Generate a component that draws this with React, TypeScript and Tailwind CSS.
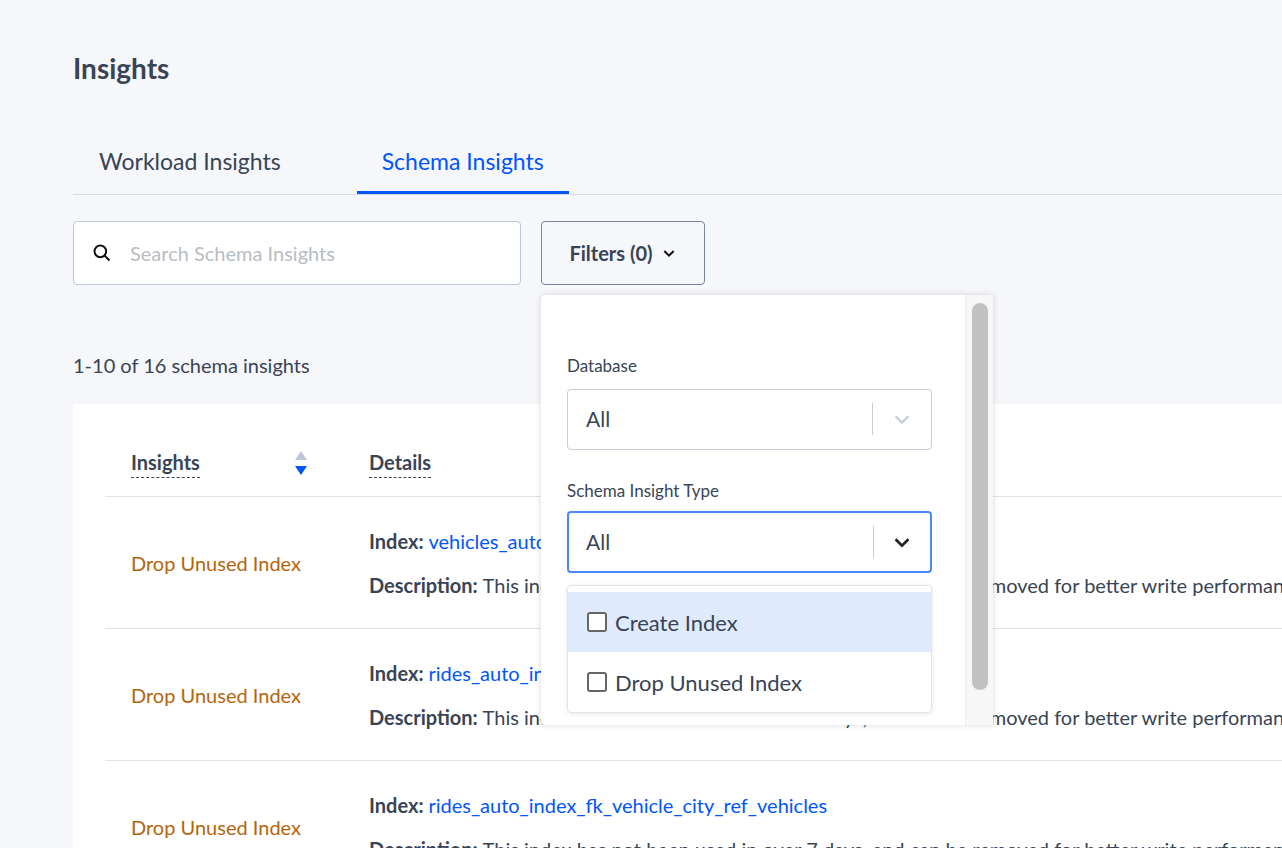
import React from "react";

const rows = [
  { idx: "vehicles_auto_index_fk_city_ref_users" },
  { idx: "rides_auto_index_fk_city_ref_users" },
  { idx: "rides_auto_index_fk_vehicle_city_ref_vehicles" },
];

function Row({ idx }: { idx: string }) {
  return (
    <div className="flex h-[132px] items-center border-b border-[#dfe3ea]">
      <div className="w-[264px] shrink-0 whitespace-nowrap pl-[26px] text-[20px] text-[#b4650c]">Drop Unused Index</div>
      <div className="flex flex-col gap-[14px] whitespace-nowrap text-[20px] text-[#394455]">
        <div><span className="font-bold">Index: </span><span className="text-[#0055ff]">{idx}</span></div>
        <div><span className="font-bold">Description: </span>This index has not been used in over 7 days, and can be removed for better write performance.</div>
      </div>
    </div>
  );
}

export default function App() {
  return (
    <div className="relative h-[848px] w-[1282px] overflow-hidden bg-[#f5f7fa] font-[Lato,sans-serif] text-[#394455]">
      <div className="pl-[73px]">
        <h1 className="pt-[50px] text-[28px] font-bold leading-[36px] text-[#394455]">Insights</h1>
        <div className="mt-[50px] flex h-[59px] border-b border-[#d6dbe4] text-[23px]">
          <div className="px-[26px] pt-[8px]">Workload Insights</div>
          <div className="ml-[50px] border-b-[3px] border-[#0055ff] px-[25px] pt-[8px] text-[#0055ff]">Schema Insights</div>
        </div>
        <div className="mt-[26px] flex gap-[20px]">
          <div className="flex h-[64px] w-[448px] items-center gap-[18px] rounded border border-[#c0c6d9] bg-white px-[18px]">
            <svg width="20" height="20" viewBox="0 0 24 24" fill="none" stroke="#111" strokeWidth="2.4"><circle cx="10" cy="10" r="7" /><path d="M15 15l6 6" /></svg>
            <span className="text-[20px] text-[#b8bcc4]">Search Schema Insights</span>
          </div>
          <div className="flex h-[64px] w-[164px] items-center justify-center gap-[8px] rounded border border-[#7a849a] text-[20px] font-bold">
            Filters (0)
            <svg width="16" height="16" viewBox="0 0 24 24" fill="none" stroke="#111" strokeWidth="3"><path d="M5 9l7 7 7-7" /></svg>
          </div>
        </div>
        <div className="mt-[65px] text-[20px]">1-10 of 16 schema insights</div>
        <div className="mt-[24px] overflow-hidden bg-white pl-[32px]">
          <div className="flex h-[93px] items-end border-b border-[#dfe3ea] pb-[18px]">
            <div className="flex w-[264px] shrink-0 items-center pl-[26px]">
              <span className="border-b border-dashed border-[#394455] text-[20px] font-bold">Insights</span>
              <svg className="ml-[94px]" width="14" height="26" viewBox="0 0 14 26"><path d="M7 1l6 9H1z" fill="#c0c6d9" /><path d="M7 25l6-9H1z" fill="#0055ff" /></svg>
            </div>
            <span className="border-b border-dashed border-[#394455] text-[20px] font-bold">Details</span>
          </div>
          {rows.map((r) => <Row key={r.idx} idx={r.idx} />)}
        </div>
      </div>
      <div className="absolute left-[541px] top-[295px] flex h-[430px] w-[452px] rounded-l bg-white shadow-[0_0_6px_rgba(0,0,0,0.15)]">
        <div className="flex-1 pl-[26px] pr-[33px] pt-[58px]">
          <div className="text-[17px] text-[#394455]">Database</div>
          <div className="mt-[10px] flex h-[61px] items-center rounded border border-[#c9cdd9] pl-[18px]">
            <span className="flex-1 text-[21px]">All</span>
            <div className="h-[32px] w-px bg-[#ccc]" />
            <svg className="mx-[18px]" width="22" height="22" viewBox="0 0 24 24" fill="none" stroke="#c9cdd9" strokeWidth="2.6"><path d="M5 9l7 7 7-7" /></svg>
          </div>
          <div className="mt-[28px] text-[17px]">Schema Insight Type</div>
          <div className="mt-[8px] flex h-[62px] items-center rounded border-2 border-[#4a87f7] pl-[17px]">
            <span className="flex-1 text-[21px]">All</span>
            <div className="h-[32px] w-px bg-[#ccc]" />
            <svg className="mx-[17px]" width="22" height="22" viewBox="0 0 24 24" fill="none" stroke="#222" strokeWidth="3"><path d="M5 9l7 7 7-7" /></svg>
          </div>
          <div className="mt-[12px] rounded border border-[#e2e4e8] pt-[6px] shadow-[0_1px_4px_rgba(0,0,0,0.1)]">
            <div className="flex h-[60px] items-center gap-[8px] bg-[#dfeafd] pl-[19px] text-[22px]">
              <span className="h-[20px] w-[20px] rounded-[3px] border-2 border-[#666] bg-white" />Create Index
            </div>
            <div className="flex h-[60px] items-center gap-[8px] pl-[19px] text-[22px]">
              <span className="h-[20px] w-[20px] rounded-[3px] border-2 border-[#666] bg-white" />Drop Unused Index
            </div>
          </div>
        </div>
        <div className="w-[28px] border-l border-[#eee] bg-[#f7f7f7] pl-[6px] pt-[8px]">
          <div className="h-[387px] w-[16px] rounded-full bg-[#c1c1c1]" />
        </div>
      </div>
    </div>
  );
}
